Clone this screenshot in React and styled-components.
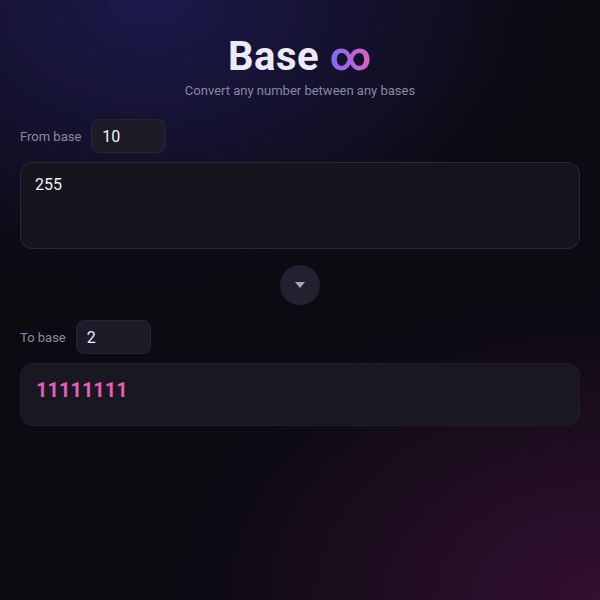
import React, { useState } from "react";
import styled, { createGlobalStyle } from "styled-components";

const Global = createGlobalStyle`
  html, body {
    margin: 0;
    padding: 0;
    background: #0b0b12;
  }
  body {
    font-family: Roboto, "Liberation Sans", sans-serif;
  }
`;

const Page = styled.main`
  width: 600px;
  height: 600px;
  box-sizing: border-box;
  padding: 33px 20px 20px;
  background:
    radial-gradient(ellipse 400px 280px at 150px 0px, rgba(36, 30, 100, 0.7), rgba(36, 30, 100, 0) 100%),
    radial-gradient(ellipse 420px 300px at 600px 600px, rgba(62, 16, 56, 0.8), rgba(62, 16, 56, 0) 100%),
    #0b0b12;
  display: flex;
  flex-direction: column;
`;

const Header = styled.header`
  display: flex;
  flex-direction: column;
  align-items: center;
  margin-bottom: 21px;
`;

const Title = styled.h1`
  margin: 0;
  font-size: 40px;
  line-height: 48px;
  font-weight: 700;
  color: #ecebf5;
  letter-spacing: 0.5px;
`;

const Infinity = styled.span`
  background: linear-gradient(90deg, #7c6cf6, #e45fc0);
  -webkit-background-clip: text;
  background-clip: text;
  color: transparent;
`;

const Subtitle = styled.p`
  margin: 2px 0 0;
  font-size: 13px;
  color: #8a889e;
`;

const BaseRow = styled.div`
  display: flex;
  align-items: center;
  gap: 10px;
  margin-bottom: 9px;
`;

const Label = styled.label`
  font-size: 13px;
  color: #8b8a9c;
`;

const BaseInput = styled.input`
  width: 75px;
  height: 34px;
  box-sizing: border-box;
  padding: 0 10px;
  border-radius: 8px;
  border: 1px solid #262534;
  background: #1c1b27;
  color: #f0f0f6;
  font-family: inherit;
  font-size: 16px;
  outline: none;
`;

const Area = styled.textarea`
  display: block;
  width: 100%;
  height: 87px;
  box-sizing: border-box;
  padding: 12px 14px;
  border-radius: 12px;
  border: 1px solid #2a2938;
  background: #15151d;
  color: #f0f0f6;
  font-family: inherit;
  font-size: 16px;
  resize: none;
  outline: none;
`;

const SwapWrap = styled.div`
  display: flex;
  justify-content: center;
  margin: 16px 0 15px;
`;

const SwapButton = styled.button`
  width: 40px;
  height: 40px;
  border-radius: 50%;
  border: none;
  background: #222130;
  display: flex;
  align-items: center;
  justify-content: center;
  padding: 0;
  cursor: pointer;
`;

const Output = styled.div`
  height: 63px;
  box-sizing: border-box;
  padding: 14px 15px 0;
  border-radius: 12px;
  border: 1px solid #1f1e29;
  background: #191820;
  color: #ea5cba;
  font-size: 20px;
  line-height: 24px;
  font-weight: 700;
`;

export default function App() {
  const [fromBase, setFromBase] = useState("10");
  const [toBase, setToBase] = useState("2");
  const [value, setValue] = useState("255");

  const convert = () => {
    const n = parseInt(value.trim(), Number(fromBase));
    if (isNaN(n)) return "";
    return n.toString(Number(toBase));
  };

  return (
    <Page>
      <Global />
      <Header>
        <Title>
          Base <Infinity>∞</Infinity>
        </Title>
        <Subtitle>Convert any number between any bases</Subtitle>
      </Header>

      <BaseRow>
        <Label>From base</Label>
        <BaseInput value={fromBase} onChange={(e) => setFromBase(e.target.value)} />
      </BaseRow>
      <Area value={value} onChange={(e) => setValue(e.target.value)} />

      <SwapWrap>
        <SwapButton>
          <svg width="10" height="6" viewBox="0 0 10 6">
            <path d="M0 0 L10 0 L5 6 Z" fill="#a9a8b8" />
          </svg>
        </SwapButton>
      </SwapWrap>

      <BaseRow>
        <Label>To base</Label>
        <BaseInput value={toBase} onChange={(e) => setToBase(e.target.value)} />
      </BaseRow>
      <Output>{convert()}</Output>
    </Page>
  );
}
